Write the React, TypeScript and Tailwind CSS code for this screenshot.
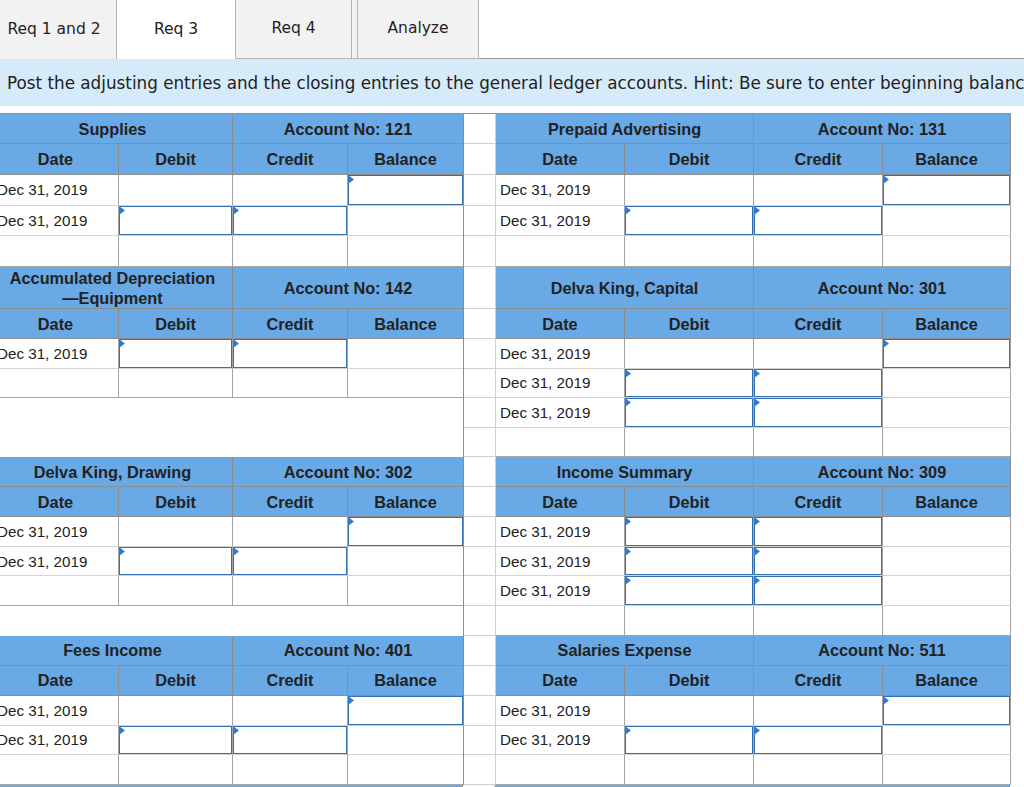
import React from 'react';

type Row = 'bal' | 'dc' | 'blank';
type Sizes = { h1: string; h2: string; rh: string };

type Account = { title: React.ReactNode; no: string; rows: Row[] };

const hd =
  'flex items-center justify-center border-b border-r border-[#8d8d8d] bg-[#69a9e6] text-center text-[16.3px] font-bold leading-[20px] text-[#222]';

function Flag() {
  return (
    <svg className="pointer-events-none absolute left-0 top-0" width="6" height="9" viewBox="0 0 6 9">
      <polygon points="0,0 6,4.5 0,9" fill="#2c7bd0" />
    </svg>
  );
}

function Field() {
  return (
    <div className="relative h-full w-full">
      <input className="block h-full w-full border border-[#3570ab] bg-white px-1 text-[15px] outline-none" />
      <Flag />
    </div>
  );
}

function Ledger({ acc, s, right }: { acc: Account; s: Sizes; right?: boolean }) {
  const cols = right ? 'grid-cols-[129px_129px_129px_128px]' : 'grid-cols-[126px_114px_115px_115px]';
  const endHd = right ? '' : 'border-r-0';
  return (
    <div className={`grid self-start ${cols}`}>
      <div className={`col-span-2 ${hd} ${s.h1}`}>{acc.title}</div>
      <div className={`col-span-2 ${hd} ${s.h1} ${endHd}`}>Account No: {acc.no}</div>
      <div className={`${hd} ${s.h2}`}>Date</div>
      <div className={`${hd} ${s.h2}`}>Debit</div>
      <div className={`${hd} ${s.h2}`}>Credit</div>
      <div className={`${hd} ${s.h2} ${endHd}`}>Balance</div>
      {acc.rows.map((r, i) => {
        const last = i === acc.rows.length - 1;
        const bb = last ? 'border-b border-b-[#a6a6a6]' : 'border-b border-b-[#d3d3d3]';
        const vr = 'border-r border-r-[#a3a3a3]';
        return (
          <React.Fragment key={i}>
            <div className={`flex items-center pl-1 pt-[2px] text-[15.2px] text-[#222] ${s.rh} ${bb} ${vr}`}>
              {r !== 'blank' ? 'Dec 31, 2019' : ''}
            </div>
            <div className={`${s.rh} ${bb} ${vr}`}>{r === 'dc' && <Field />}</div>
            <div className={`${s.rh} ${bb} ${vr}`}>{r === 'dc' && <Field />}</div>
            <div className={`${s.rh} ${bb} ${right ? vr : ''}`}>{r === 'bal' && <Field />}</div>
          </React.Fragment>
        );
      })}
    </div>
  );
}

function Gap({ s, count }: { s: Sizes; count: number }) {
  const cells = [s.h1, s.h2, ...Array.from({ length: count }, () => s.rh)];
  return (
    <div className="flex w-[33px] shrink-0 flex-col border-l border-l-[#8d8d8d]">
      {cells.map((h, i) => (
        <div key={i} className={`${h} border-b border-r border-[#cfcfcf]`} />
      ))}
    </div>
  );
}

function Section({ left, right, s }: { left: Account; right: Account; s: Sizes }) {
  return (
    <div className="flex items-start">
      <div className="w-[470px] shrink-0">
        <Ledger acc={left} s={s} />
      </div>
      <Gap s={s} count={right.rows.length} />
      <Ledger acc={right} s={s} right />
    </div>
  );
}

const sections: { left: Account; right: Account; s: Sizes }[] = [
  {
    s: { h1: 'h-[30px]', h2: 'h-[31px]', rh: 'h-[30.7px]' },
    left: { title: 'Supplies', no: '121', rows: ['bal', 'dc', 'blank'] },
    right: { title: 'Prepaid Advertising', no: '131', rows: ['bal', 'dc', 'blank'] },
  },
  {
    s: { h1: 'h-[42px]', h2: 'h-[30px]', rh: 'h-[29.5px]' },
    left: {
      title: (
        <span>
          Accumulated Depreciation
          <br />
          —Equipment
        </span>
      ),
      no: '142',
      rows: ['dc', 'blank'],
    },
    right: { title: 'Delva King, Capital', no: '301', rows: ['bal', 'dc', 'dc', 'blank'] },
  },
  {
    s: { h1: 'h-[30px]', h2: 'h-[30px]', rh: 'h-[29.7px]' },
    left: { title: 'Delva King, Drawing', no: '302', rows: ['bal', 'dc', 'blank'] },
    right: { title: 'Income Summary', no: '309', rows: ['dc', 'dc', 'dc', 'blank'] },
  },
  {
    s: { h1: 'h-[30px]', h2: 'h-[30px]', rh: 'h-[29.7px]' },
    left: { title: 'Fees Income', no: '401', rows: ['bal', 'dc', 'blank'] },
    right: { title: 'Salaries Expense', no: '511', rows: ['bal', 'dc', 'blank'] },
  },
];

export default function App() {
  return (
    <div className="min-h-screen w-full overflow-hidden bg-white">
      {/* tabs */}
      <div className="-ml-[8px] flex h-[59px] font-['DejaVu_Sans',Verdana,sans-serif] text-[15.5px] text-[#222]">
        <div className="flex w-[125px] shrink-0 items-center justify-center border-r border-[#b5b5b5] bg-[#f2f2f2]">
          Req 1 and 2
        </div>
        <div className="flex w-[119px] shrink-0 items-center justify-center border-r border-[#b5b5b5] bg-white">
          Req 3
        </div>
        <div className="flex w-[116px] shrink-0 items-center justify-center border-b border-r border-[#b5b5b5] bg-[#f2f2f2]">
          Req 4
        </div>
        <div className="w-[5px] shrink-0 border-b border-[#b5b5b5] bg-[#f2f2f2]" />
        <div className="flex w-[122px] shrink-0 items-center justify-center border-x border-b border-[#b5b5b5] bg-[#f2f2f2]">
          Analyze
        </div>
        <div className="flex-1 border-b border-[#9a9a9a]" />
      </div>

      {/* instructions */}
      <div className="flex h-[47px] items-center whitespace-nowrap bg-[#d6ebfa] pl-[7px] pt-[2px] font-['DejaVu_Sans',Verdana,sans-serif] text-[16.8px] text-[#222]">
        Post the adjusting entries and the closing entries to the general ledger accounts. Hint: Be sure to enter beginning balances.
      </div>

      {/* ledgers */}
      <div className="-ml-[7px] mt-[7px] w-fit border-t border-[#8d8d8d] font-['Liberation_Sans',Arial,sans-serif]">
        {sections.map((sec, i) => (
          <Section key={i} left={sec.left} right={sec.right} s={sec.s} />
        ))}
        <div className="flex h-[30px]">
          <div className="w-[470px] shrink-0 border-r border-[#8d8d8d] bg-[#69a9e6]" />
          <div className="w-[32px] shrink-0 border-r border-[#cfcfcf]" />
          <div className="w-[515px] shrink-0 border-r border-[#8d8d8d] bg-[#69a9e6]" />
        </div>
      </div>
    </div>
  );
}
